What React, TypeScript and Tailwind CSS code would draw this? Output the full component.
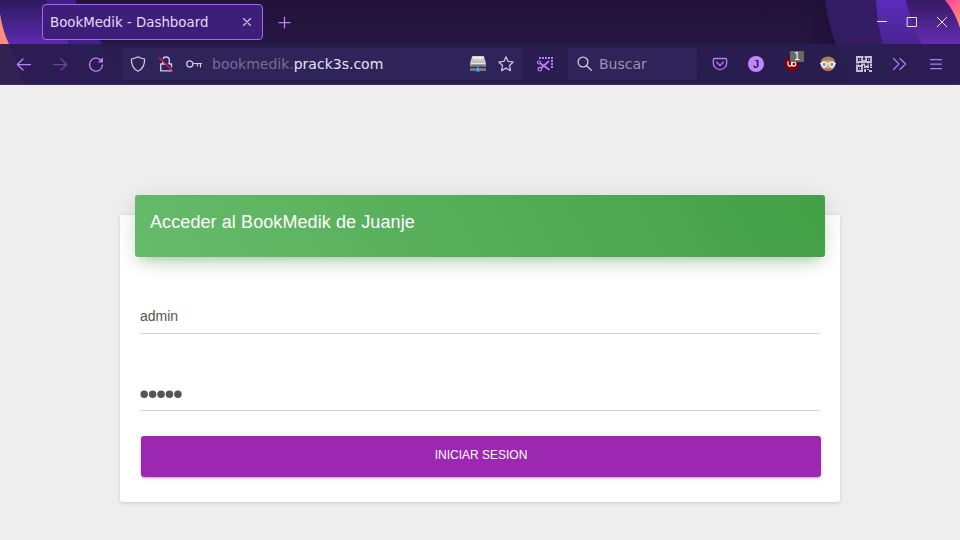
import React from "react";

type IconProps = { children: React.ReactNode; className?: string };

function Icon({ children, className = "" }: IconProps) {
  return (
    <svg
      width="16"
      height="16"
      viewBox="0 0 16 16"
      fill="none"
      stroke="currentColor"
      strokeWidth="1.25"
      strokeLinecap="round"
      strokeLinejoin="round"
      className={`block shrink-0 overflow-visible ${className}`}
    >
      {children}
    </svg>
  );
}

function ThemeArt() {
  return (
    <svg className="absolute inset-0" width="960" height="85" viewBox="0 0 960 85">
      <defs>
        <linearGradient id="base" x1="0" y1="0" x2="0" y2="1">
          <stop offset="0" stopColor="#221139" />
          <stop offset="0.52" stopColor="#251742" />
          <stop offset="1" stopColor="#25173f" />
        </linearGradient>
        <linearGradient id="leftBand" x1="0" y1="0" x2="0" y2="1">
          <stop offset="0" stopColor="#2c1a5c" />
          <stop offset="0.5" stopColor="#5c2aae" />
          <stop offset="1" stopColor="#5c2aae" />
        </linearGradient>
        <linearGradient id="rightBand" x1="0" y1="0" x2="0" y2="1">
          <stop offset="0" stopColor="#5a2cbc" />
          <stop offset="0.52" stopColor="#4a248f" />
          <stop offset="1" stopColor="#4a248f" />
        </linearGradient>
        <linearGradient id="innerBand" x1="0" y1="0" x2="0" y2="1">
          <stop offset="0" stopColor="#371a63" />
          <stop offset="0.52" stopColor="#642db2" />
          <stop offset="1" stopColor="#642db2" />
        </linearGradient>
        <linearGradient id="coral" x1="0" y1="0" x2="0.6" y2="1">
          <stop offset="0" stopColor="#ff3fa4" />
          <stop offset="1" stopColor="#ff8b78" />
        </linearGradient>
        <linearGradient id="edge" x1="0" y1="0" x2="1" y2="0">
          <stop offset="0" stopColor="#1d1238" stopOpacity="0" />
          <stop offset="1" stopColor="#1b1138" />
        </linearGradient>
      </defs>
      <rect width="960" height="85" fill="url(#base)" />
      <path d="M0 0H75Q85 25 103 44L130 85H0Z" fill="#41208a" />
      <path d="M0 0H46Q55 25 69 44L98 85H0Z" fill="url(#leftBand)" />
      <path d="M0 14Q3 32 9 44L24 85H0Z" fill="#ff8f7a" />
      <rect x="800" width="36" height="85" fill="url(#edge)" />
      <path d="M825 0Q828 24 836 44L850 85H960V0Z" fill="#331c63" />
      <path d="M876 0Q877 24 883 44L895 85H960V0Z" fill="url(#rightBand)" />
      <path d="M906 0Q910 22 922 44L950 85H960V0Z" fill="url(#innerBand)" />
      <path d="M945 0Q955 12 960 28V0Z" fill="url(#coral)" />
      <rect y="44" width="960" height="41" fill="#2a1d50" fillOpacity="0.96" />
      <rect y="84" width="960" height="1" fill="#3d2d70" />
    </svg>
  );
}

function TabStrip() {
  return (
    <div className="relative flex h-11 items-center pl-[42px] pr-[10px]">
      <div className="flex h-9 w-[221px] items-center justify-between rounded-[4px] border border-[#a468f5] bg-[#3d1f7a] pl-[7px] pr-[7px] text-[13.333px] text-[#e4d8fb]">
        <span className="whitespace-nowrap pt-[2px]">BookMedik - Dashboard</span>
        <Icon className="text-[#d9cbf5]">
          <path d="M4.500 4.500l7 7M11.500 4.500l-7 7" strokeWidth="1.100" />
        </Icon>
      </div>
      <Icon className="ml-[13px] text-[#bd7ff8]">
        <path d="M8.500 3v11M3 8.500h11" />
      </Icon>
      <div className="ml-auto flex gap-[14px] text-[#eadff9]">
        <Icon>
          <path d="M3 7.500h10" strokeWidth="1" strokeLinecap="butt" />
        </Icon>
        <Icon>
          <path d="M3.500 3.500h9v9h-9z" strokeWidth="1" strokeLinejoin="miter" />
        </Icon>
        <Icon>
          <path d="M3.200 3.200l9.600 9.600M12.800 3.200l-9.600 9.600" strokeWidth="1" />
        </Icon>
      </div>
    </div>
  );
}

function AddressBar() {
  return (
    <div className="ml-[18px] flex h-8 w-[400px] items-center rounded-[4px] bg-[#2e2459] px-2 text-[#cfc7e6]">
      <Icon>
        <path d="M8 .8C6.200 2.100 3.700 2.600 1.400 3c-.2 5.500 1.900 10 6.600 12.200C12.700 13 14.800 8.500 14.600 3 12.300 2.600 9.800 2.100 8 .8Z" />
      </Icon>
      <Icon className="ml-3">
        <path d="M2.700 8h10.800v6.900H2.700zM4.700 8V4.300a3.300 3.300 0 0 1 6.600 0V8" strokeWidth="1.400" />
        <path d="M2.500 1.200l12 12" stroke="#2e2459" strokeWidth="1.600" />
        <path d="M1.500 2l13 13" stroke="#e21b50" strokeWidth="1.300" />
      </Icon>
      <Icon className="ml-3">
        <circle cx="3.800" cy="8" r="3.100" strokeWidth="1.300" />
        <path d="M7 7.500h8.500M11.500 7.500v2.500M14.500 7.500v3.500" strokeWidth="1.200" />
      </Icon>
      <span className="ml-[10px] whitespace-nowrap text-[14px] text-[#766c98]">
        bookmedik.<span className="text-[#e8e0fa]">prack3s.com</span>
      </span>
      <Icon className="ml-auto">
        <g stroke="none">
          <path d="M2.200 0h11.600L16 7H0z" fill="#c9c9c5" />
          <path d="M3 .8h10v2H3z" fill="#eeeeeb" />
          <path d="M0 5.800h16v4.800H0z" fill="#a2a29e" />
          <path d="M1 6.600h14v1.400H1z" fill="#e8e8e4" />
          <path d="M1.500 9h13v.8h-13z" fill="#666761" />
          <path d="M7 10.400h2v2H7z" fill="#70716f" />
          <path d="M0 12h16v3H0z" fill="#77787a" />
          <path d="M6 12h4v3.800H6z" fill="#3979c7" />
          <path d="M7 12.500h2v2H7z" fill="#77b9ff" />
        </g>
      </Icon>
      <Icon className="ml-3">
        <path d="M8 .8l2.100 4.600 5.100.6-3.700 3.500.9 5.100L8 12.100l-4.400 2.500.9-5.100L.8 6l5.100-.6Z" />
      </Icon>
    </div>
  );
}

function SearchBox() {
  return (
    <div className="ml-[15px] flex h-8 w-[129px] items-center rounded-[4px] bg-[#2e2459] pl-[9px]">
      <Icon className="text-[#cfc7e6]">
        <circle cx="6" cy="6" r="4.900" strokeWidth="1.300" />
        <path d="M9.700 9.700l4.600 4.600" strokeWidth="1.300" />
      </Icon>
      <span className="ml-[6px] text-[14px] text-[#9b92b8]">Buscar</span>
    </div>
  );
}

function Extensions() {
  return (
    <div className="ml-[15px] flex gap-5 text-[#b37bee]">
      <Icon>
        <path d="M2.700 2.500h10.600q1.400 0 1.400 1.400v3a6.700 6.700 0 0 1-13.400 0v-3q0-1.400 1.400-1.400ZM4.700 6.300L8 9.500l3.300-3.200" strokeWidth="1.350" />
      </Icon>
      <div className="flex h-4 w-4 items-center justify-center rounded-full bg-[#c485ff] font-['Liberation_Sans',sans-serif] text-[11px] font-bold leading-none text-[#2b1d50]">
        J
      </div>
      <div className="relative">
        <Icon>
          <path d="M8 .5C6 2 3.500 2.400 1 2.600V8c0 4 4 6.500 7 8 3-1.500 7-4 7-8V2.600C12.500 2.400 10 2 8 .5Z" fill="#800008" stroke="none" />
          <path d="M4 5.500V8.400q0 1.700 1.800 1.700t1.900-1.700V5.500" stroke="#fff" strokeWidth="1.100" />
          <circle cx="9.800" cy="8.100" r="2" stroke="#fff" strokeWidth="1.100" />
        </Icon>
        <div className="absolute left-[6px] top-[-5px] flex h-[11px] w-[14px] items-center justify-center rounded-[1px] bg-[#686868] text-[10px] leading-none text-white">
          1
        </div>
      </div>
      <Icon>
        <g stroke="none">
          <circle cx="8" cy="8" r="7.200" fill="#d49a73" />
          <path d="M.8 8C.4 3 3.600.8 8 .8S15.600 3 15.200 8L12 6 9 4 3 6Z" fill="#a68255" />
          <path d="M5 12q3 2 6 0v2q-3 2-6 0Z" fill="#b36d52" />
          <path d="M0 6.800h16v1.700H0z" fill="#e4e5de" />
        </g>
        <circle cx="4.200" cy="8.500" r="2.400" fill="#6fa5ad" stroke="#eceeea" strokeWidth="1.500" />
        <circle cx="11.800" cy="8.500" r="2.400" fill="#6fa5ad" stroke="#eceeea" strokeWidth="1.500" />
      </Icon>
      <Icon className="text-[#c6c0d4]">
        <path d="M1 1h5v5H1zM10 1h5v5h-5zM1 10h5v5H1z" strokeWidth="1.900" strokeLinejoin="miter" />
        <path
          d="M3 3h1v1H3zM12 3h1v1h-1zM3 12h1v1H3zM7.500 0h1v2h-1zM7 4h2v3H7zM0 7.500h3v1H0zM5 7.500h4v2H5zM11 7.500h2v1h-2zM14 7.500h2v3h-2zM8 9.500h4v2.500H8zM12 9h1v3h-1zM8 13h2v3H8zM11 13h2v1h-2zM13 14h3v2h-3zM14 11h2v1h-2z"
          fill="currentColor"
          stroke="none"
        />
      </Icon>
      <Icon>
        <path d="M1.500 2.500L7 8 1.500 13.500M8 2.500L13.500 8 8 13.500" />
      </Icon>
      <Icon>
        <path d="M2.500 3.500h11M2.500 8h11M2.500 12.500h11" />
      </Icon>
    </div>
  );
}

function Toolbar() {
  return (
    <div className="relative flex h-10 items-center pl-4 text-[#bd7ff8]">
      <Icon>
        <path d="M14.500 8.500h-13M7 3L1.300 8.500 7 14" />
      </Icon>
      <Icon className="ml-5 text-[#6e479c]">
        <path d="M1.500 8.500h13M9 3l5.700 5.500L9 14" />
      </Icon>
      <Icon className="ml-5">
        <path d="M12.600 4A6.500 6.500 0 1 0 14.500 9" strokeWidth="1.400" />
        <path d="M15 1.200v5.300H9.700Z" fill="currentColor" stroke="none" />
      </Icon>
      <AddressBar />
      <Icon className="ml-[15px]">
        <path
          d="M2 1h2v2H2zM5 1h2v2H5zM8 1h2v2H8zM11 1h2v2h-2zM14 1h2v2h-2zM14 4h2v2h-2zM14 7h2v2h-2zM14 10h2v2h-2z"
          fill="currentColor"
          stroke="none"
        />
        <circle cx="2" cy="6.500" r="1.500" strokeWidth="1.200" />
        <circle cx="2.800" cy="13.200" r="1.800" strokeWidth="1.200" />
        <path d="M3.500 7.500l8.500 6M4.200 12L11.500 5.500" strokeWidth="1.700" />
      </Icon>
      <SearchBox />
      <Extensions />
    </div>
  );
}

function LoginCard() {
  return (
    <section className="mx-auto flow-root h-[287px] w-[720px] rounded-[3px] bg-white px-[15px] shadow-[0_1px_4px_0_rgba(0,0,0,0.14)]">
      <header className="-mt-5 h-[62px] rounded-[3px] bg-[linear-gradient(60deg,#66bb6a,#43a047)] px-[15px] pt-[15px] shadow-[0_12px_20px_-10px_rgba(76,175,80,0.28),0_4px_20px_0_rgba(0,0,0,0.12),0_7px_8px_-5px_rgba(76,175,80,0.2)]">
        <h4 className="whitespace-nowrap text-[18px] leading-[25px] tracking-[0.090px] text-white">
          Acceder al BookMedik de Juanje
        </h4>
      </header>
      <form className="px-[5px]" onSubmit={(e) => e.preventDefault()}>
        <div className="mt-[41px] h-9 border-b border-[#d2d2d2] text-[14px] leading-[36px] text-[#555]">
          admin
        </div>
        <div className="mt-[41px] flex h-9 items-center border-b border-[#d2d2d2] pt-[3px]">
          <svg width="44" height="8" viewBox="0 0 44 8" fill="#555">
            {[0, 1, 2, 3, 4].map((n) => (
              <circle key={n} cx={4.200 + n * 8.430} cy="4.200" r="3.750" />
            ))}
          </svg>
        </div>
        <button
          type="submit"
          className="ml-px mt-[25px] block h-[41px] w-[680px] rounded-[3px] bg-[#9c27b0] pb-[3px] text-center text-[12px] leading-[17px] text-white shadow-[0_2px_2px_0_rgba(156,39,176,0.14),0_3px_1px_-2px_rgba(156,39,176,0.2),0_1px_5px_0_rgba(156,39,176,0.12)]"
        >
          INICIAR SESION
        </button>
      </form>
    </section>
  );
}

export default function App() {
  return (
    <div className="h-[540px] w-[960px] overflow-hidden bg-[#eeeeee]">
      <div className="relative h-[85px] font-['DejaVu_Sans',sans-serif]">
        <ThemeArt />
        <TabStrip />
        <Toolbar />
      </div>
      <main className="pt-[130px] font-['Liberation_Sans',Arial,sans-serif]">
        <LoginCard />
      </main>
    </div>
  );
}
